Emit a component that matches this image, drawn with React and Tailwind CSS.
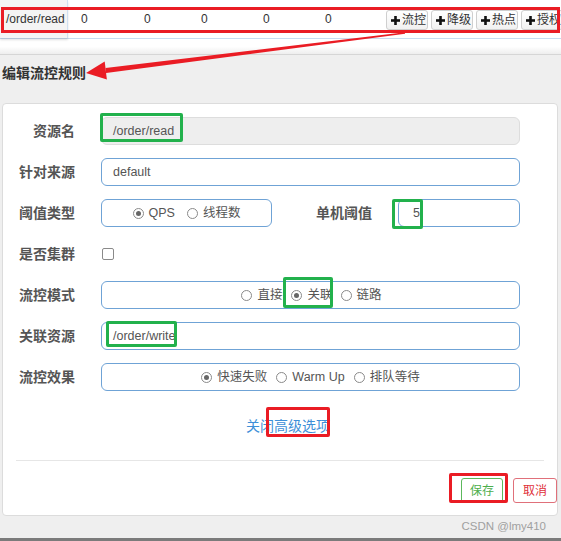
import React from "react";

const zeros = [
  { w: "w-[62px]", pl: "pl-[13px]" },
  { w: "w-[58px]", pl: "pl-[14px]" },
  { w: "w-[62px]", pl: "pl-[13px]" },
  { w: "w-[62px]", pl: "pl-[13px]" },
  { w: "w-[62px]", pl: "pl-[13px]" },
];

const actions = ["流控", "降级", "热点", "授权"];

function PlusGlyph() {
  return (
    <svg width="9" height="9" viewBox="0 0 9 9" className="shrink-0">
      <rect x="3.2" y="0" width="2.6" height="9" fill="#111" />
      <rect x="0" y="3.2" width="9" height="2.6" fill="#111" />
    </svg>
  );
}

function Radio({ checked, label, className = "" }) {
  return (
    <span className={"inline-flex items-center " + className}>
      <span className="w-[11px] h-[11px] rounded-full border border-[#8a8a8a] bg-white flex items-center justify-center">
        {checked && <span className="w-[5px] h-[5px] rounded-full bg-[#666]" />}
      </span>
      <span className="ml-[5px]">{label}</span>
    </span>
  );
}

function Row({ label, children }) {
  return (
    <div className="flex items-center h-[28px]">
      <div className="w-[72px] text-right text-[14px] font-bold text-[#555]">{label}</div>
      <div className="ml-[26px] flex-1 flex items-center h-full pr-[37px]">{children}</div>
    </div>
  );
}

const box = "h-[28px] border border-[#6fa3d6] rounded-[6px] bg-white flex items-center text-[12.5px] text-[#555]";

export default function App() {
  return (
    <div className="relative w-[561px] h-[541px] overflow-hidden bg-[#efefef] font-['Liberation_Sans','Noto_Sans_CJK_SC',sans-serif]">
      {/* table row */}
      <div className="h-[38px] bg-white flex items-stretch text-[12px] text-[#333]">
        <div className="w-[68px] shrink-0 bg-[#f4f4f4] border-r border-[#cfe0f1] flex items-center pl-[6px] shadow-[0_2px_2px_rgba(0,0,0,0.12)]">
          /order/read
        </div>
        {zeros.map((z, i) => (
          <div key={i} className={z.w + " " + z.pl + " shrink-0 pt-[10px]"}>0</div>
        ))}
        <div className="ml-[12px] flex items-start pt-[10px] gap-[3px] shrink-0">
          {actions.map((a) => (
            <div key={a} className="h-[20px] w-[42px] shrink-0 flex items-center pl-[4px] border border-[#cfcfcf] rounded-[3px] bg-gradient-to-b from-white to-[#f1f1f1]">
              <PlusGlyph />
              <span className="ml-[2px]">{a}</span>
            </div>
          ))}
        </div>
      </div>
      <div className="h-[17px] border-t border-[#c9dcf0] border-b border-b-[#d6d6d6] bg-gradient-to-b from-white via-white to-[#eeeeee]" />

      {/* heading */}
      <div className="mt-[9px] pl-[2px] text-[14px] leading-[18px] font-bold text-[#333]">编辑流控规则</div>

      {/* card */}
      <div className="mt-[21px] ml-[2px] w-[556px] h-[413px] bg-white border border-[#dcdcdc] rounded-[4px] pt-[13px] flex flex-col">
        <div className="flex flex-col gap-[13px]">
          <Row label="资源名">
            <div className="flex-1 h-[28px] rounded-[6px] bg-[#eeeeee] border border-[#dddddd] flex items-center pl-[11px] text-[12.5px] text-[#555]">
              /order/read
            </div>
          </Row>
          <Row label="针对来源">
            <div className={box + " flex-1 pl-[11px]"}>default</div>
          </Row>
          <div className="flex items-center h-[28px]">
            <div className="w-[72px] text-right text-[14px] font-bold text-[#555]">阈值类型</div>
            <div className={box + " ml-[26px] w-[171px] justify-center"}>
              <Radio checked label="QPS" />
              <Radio label="线程数" className="ml-[12px]" />
            </div>
            <div className="w-[100px] text-right text-[14px] font-bold text-[#555]">单机阈值</div>
            <div className={box + " ml-[26px] w-[122px] pl-[14px]"}>5</div>
          </div>
          <Row label="是否集群">
            <span className="ml-[1px] w-[12px] h-[12px] rounded-[2px] border border-[#8a8a8a] bg-white" />
          </Row>
          <Row label="流控模式">
            <div className={box + " flex-1 justify-center pl-[2px]"}>
              <Radio label="直接" />
              <Radio checked label="关联" className="ml-[9px]" />
              <Radio label="链路" className="ml-[8px]" />
            </div>
          </Row>
          <Row label="关联资源">
            <div className={box + " flex-1 pl-[11px]"}>/order/write</div>
          </Row>
          <Row label="流控效果">
            <div className={box + " flex-1 justify-center"}>
              <Radio checked label="快速失败" />
              <Radio label="Warm Up" className="ml-[9px]" />
              <Radio label="排队等待" className="ml-[9px]" />
            </div>
          </Row>
        </div>

        <div className="mt-[25px] text-center text-[14px] leading-[20px] text-[#3d8fd8] pl-[16px]">关闭高级选项</div>

        <div className="mt-[24px] mx-[13px] border-t border-[#e6e6e6]" />

        <div className="mt-[17px] flex justify-end gap-[10px]">
          <div className="h-[25px] w-[42px] rounded-[3px] border border-[#5cb85c] text-[#4cae4c] text-[12px] flex items-center justify-center">保存</div>
          <div className="h-[25px] w-[44px] rounded-[3px] border border-[#e0707a] text-[#e0303a] text-[12px] flex items-center justify-center">取消</div>
        </div>
      </div>

      {/* footer */}
      <div className="h-[22px] flex items-center justify-end pr-[15px] text-[11.5px] text-[#a0a0a0]">CSDN @lmy410</div>
      <div className="absolute left-0 right-0 bottom-0 h-[3px] bg-[#7b7b7b]" />

      {/* annotations */}
      <div className="absolute left-[1px] top-[7px] w-[559px] h-[26px] border-[3px] border-[#ea1c24]" />
      <div className="absolute left-[100px] top-[113px] w-[83px] h-[29px] border-[3px] border-[#22b14c] rounded-[2px]" />
      <div className="absolute left-[392px] top-[199px] w-[31px] h-[30px] border-[3px] border-[#22b14c] rounded-[2px]" />
      <div className="absolute left-[283px] top-[277px] w-[50px] h-[31px] border-[3px] border-[#22b14c] rounded-[2px]" />
      <div className="absolute left-[106px] top-[321px] w-[71px] h-[26px] border-[3px] border-[#22b14c] rounded-[2px]" />
      <div className="absolute left-[266px] top-[407px] w-[64px] h-[30px] border-[3px] border-[#ea1c24] rounded-[2px]" />
      <div className="absolute left-[449px] top-[473px] w-[59px] h-[30px] border-[3px] border-[#ea1c24] rounded-[2px]" />
      <svg className="absolute left-0 top-0 pointer-events-none" width="561" height="541">
        <polygon points="405.1,33.7 404.9,32.3 105.5,68 106.1,73" fill="#ea1c24" />
        <polygon points="86,73 104.7,61.6 106.9,79.4" fill="#ea1c24" />
      </svg>
    </div>
  );
}
